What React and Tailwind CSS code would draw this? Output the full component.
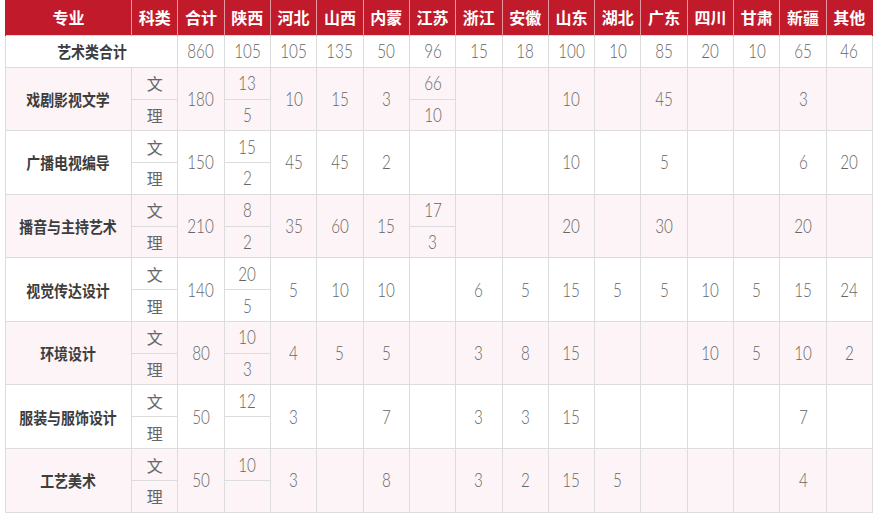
import React from "react";

const provinces = ["陕西", "河北", "山西", "内蒙", "江苏", "浙江", "安徽", "山东", "湖北", "广东", "四川", "甘肃", "新疆", "其他"];

const totals = [860, 105, 105, 135, 50, 96, 15, 18, 100, 10, 85, 20, 10, 65, 46];

// each province value: null (blank), number (merged), or [文, 理]
const majors = [
  { name: "戏剧影视文学", total: 180, pink: true, v: [[13, 5], 10, 15, 3, [66, 10], null, null, 10, null, 45, null, null, 3, null] },
  { name: "广播电视编导", total: 150, v: [[15, 2], 45, 45, 2, null, null, null, 10, null, 5, null, null, 6, 20] },
  { name: "播音与主持艺术", total: 210, pink: true, v: [[8, 2], 35, 60, 15, [17, 3], null, null, 20, null, 30, null, null, 20, null] },
  { name: "视觉传达设计", total: 140, v: [[20, 5], 5, 10, 10, null, 6, 5, 15, 5, 5, 10, 5, 15, 24] },
  { name: "环境设计", total: 80, pink: true, v: [[10, 3], 4, 5, 5, null, 3, 8, 15, null, null, 10, 5, 10, 2] },
  { name: "服装与服饰设计", total: 50, v: [[12, ""], 3, null, 7, null, 3, 3, 15, null, null, null, null, 7, null] },
  { name: "工艺美术", total: 50, pink: true, v: [[10, ""], 3, null, 8, null, 3, 2, 15, 5, null, null, null, 4, null] },
];

const cell = "border border-[#dcdcdc] p-0 text-center align-middle";

function Num({ children }) {
  return (
    <span className="inline-block scale-x-[0.8] font-['Lato','Liberation_Sans',sans-serif] text-[19px] font-light leading-none text-[#666]">
      {children}
    </span>
  );
}

function Label({ children }) {
  return (
    <span className="inline-block scale-x-[0.87] text-[16px] font-bold text-[#3d3d3d]">
      {children}
    </span>
  );
}

function Group({ m }) {
  const bg = m.pink ? "bg-[#fcf4f6]" : "bg-white";
  return (
    <>
      <tr className={`h-[32px] ${bg}`}>
        <td rowSpan={2} className={cell}>
          <Label>{m.name}</Label>
        </td>
        <td className={`${cell} text-[16px] text-[#666]`}>文</td>
        <td rowSpan={2} className={cell}>
          <Num>{m.total}</Num>
        </td>
        {m.v.map((x, i) =>
          Array.isArray(x) ? (
            <td key={i} className={cell}>
              <Num>{x[0]}</Num>
            </td>
          ) : (
            <td key={i} rowSpan={2} className={cell}>
              {x !== null && <Num>{x}</Num>}
            </td>
          )
        )}
      </tr>
      <tr className={`h-[31.6px] ${bg}`}>
        <td className={`${cell} text-[16px] text-[#666]`}>理</td>
        {m.v.map((x, i) =>
          Array.isArray(x) ? (
            <td key={i} className={cell}>
              <Num>{x[1]}</Num>
            </td>
          ) : null
        )}
      </tr>
    </>
  );
}

export default function App() {
  return (
    <div className="h-[515px] w-[876px] bg-white pl-[5px] font-['Noto_Sans_CJK_SC','Noto_Sans',sans-serif]">
      <table className="w-[868px] table-fixed border-collapse">
        <colgroup>
          <col className="w-[126px]" />
          {Array.from({ length: 16 }).map((_, i) => (
            <col key={i} />
          ))}
        </colgroup>
        <thead>
          <tr className="h-[35px] bg-[#c11b2b]">
            {["专业", "科类", "合计", ...provinces].map((h) => (
              <th
                key={h}
                className="border-x border-[#e29aa0] p-0 text-center text-[16px] font-bold text-white first:border-l-[#c11b2b] last:border-r-[#c11b2b]"
              >
                {h}
              </th>
            ))}
          </tr>
        </thead>
        <tbody>
          <tr className="h-[32px] bg-white">
            <td colSpan={2} className={cell}>
              <Label>艺术类合计</Label>
            </td>
            {totals.map((t, i) => (
              <td key={i} className={cell}>
                <Num>{t}</Num>
              </td>
            ))}
          </tr>
          {majors.map((m) => (
            <Group key={m.name} m={m} />
          ))}
        </tbody>
      </table>
    </div>
  );
}
